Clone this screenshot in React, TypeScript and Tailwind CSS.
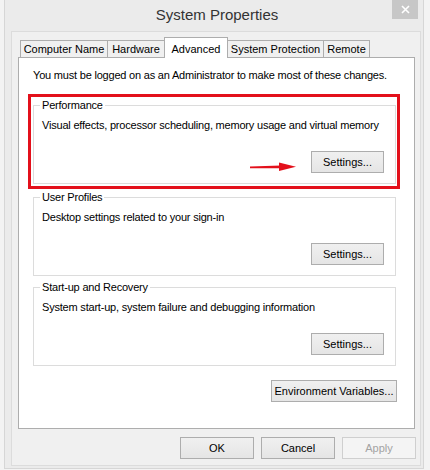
import React from "react";

const font = { fontFamily: '"Liberation Sans", Arial, sans-serif' };

const btnBase =
  "flex items-center justify-center h-[22px] border text-[11px] leading-none whitespace-nowrap";
const btn = `${btnBase} border-[#adadad] bg-linear-to-b from-[#f0f0f0] to-[#e5e5e5] text-black`;
const btnDisabled = `${btnBase} border-[#cfcfcf] bg-[#f4f4f4] text-[#a3a3a3]`;

const label = "text-[11px] leading-[15px] tracking-[-0.2px] text-black whitespace-nowrap";

const tabs = [
  { label: "Computer Name", w: "w-[88px]" },
  { label: "Hardware", w: "w-[58px]" },
  { label: "Advanced", w: "w-[64px]", active: true },
  { label: "System Protection", w: "w-[97px]" },
  { label: "Remote", w: "w-[47px]" },
];

type GroupProps = {
  title: string;
  text: string;
  className?: string;
  children?: React.ReactNode;
};

const Group = ({ title, text, className = "", children }: GroupProps) => (
  <fieldset
    className={`relative ml-[14px] mr-[18px] border border-[#dcdcdc] px-[8px] pb-[10px] ${className}`}
  >
    <legend className={`-ml-[2px] px-[2px] ${label}`}>{title}</legend>
    <p className={`mt-[5px] ${label}`}>{text}</p>
    <div className="mt-[18px] flex justify-end pr-[3px]">
      <button className={`${btn} w-[73px]`}>Settings...</button>
    </div>
    {children}
  </fieldset>
);

const App = () => {
  return (
    <div className="w-[430px] h-[470px] overflow-hidden bg-[#f3f3f3]" style={font}>
      <div className="ml-[4px] mr-[6px] h-[469px] flex flex-col border-x border-b border-[#d6d6d6] bg-[#ebebeb]">
        {/* title bar */}
        <div className="relative h-[31px] shrink-0 flex items-center justify-center pl-[6px]">
          <span className="text-[15px] text-[#333333]">System Properties</span>
          <button className="absolute top-0 right-[5px] w-[26px] h-[19px] flex items-center justify-center bg-[#c7c7c7]">
            <svg width="9" height="9" viewBox="0 0 9 9">
              <path d="M1 1 L8 8 M8 1 L1 8" stroke="#ffffff" strokeWidth="1.6" />
            </svg>
          </button>
        </div>

        {/* client area */}
        <div className="flex-1 ml-[6px] mr-[2px] mb-[2px] border border-[#dcdcdc] bg-[#f0f0f0] flex flex-col">
          <div className="flex items-end pl-[8px] pt-[5px] h-[25px]">
            {tabs.map((t, i) =>
              t.active ? (
                <div
                  key={t.label}
                  className={`${t.w} ${i ? "-ml-px" : ""} relative z-10 -mb-px h-[21px] border border-b-0 border-[#adadad] bg-white flex items-start justify-center pt-[3px] text-[11px] text-black whitespace-nowrap`}
                >
                  {t.label}
                </div>
              ) : (
                <div
                  key={t.label}
                  className={`${t.w} ${i ? "-ml-px" : ""} h-[17px] border border-b-0 border-[#adadad] bg-[#f0f0f0] flex items-center justify-center text-[11px] text-black whitespace-nowrap`}
                >
                  {t.label}
                </div>
              )
            )}
          </div>

          {/* tab page */}
          <div className="ml-[6px] mr-[5px] h-[372px] border border-[#adadad] bg-white flex flex-col pt-[10px]">
            <p className={`pl-[14px] ${label}`}>
              You must be logged on as an Administrator to make most of these changes.
            </p>

            <Group
              title="Performance"
              text="Visual effects, processor scheduling, memory usage and virtual memory"
              className="mt-[15px]"
            >
              {/* highlight frame + pointer */}
              <div className="absolute -left-[6px] -top-[19px] -right-[5px] -bottom-[6px] border-[3px] border-[#e3101b] pointer-events-none" />
              <svg
                className="absolute left-[216px] top-[49px]"
                width="46"
                height="10"
                viewBox="0 0 46 10"
              >
                <polygon points="0,4.6 31,3.6 31,6.2 0,6.2" fill="#e3101b" />
                <polygon points="29,0.6 46,4.8 29,9" fill="#e3101b" />
              </svg>
            </Group>

            <Group
              title="User Profiles"
              text="Desktop settings related to your sign-in"
              className="mt-[6px]"
            />

            <Group
              title="Start-up and Recovery"
              text="System start-up, system failure and debugging information"
              className="mt-[4px]"
            />

            <div className="mt-[14px] flex justify-end mr-[17px]">
              <button className={`${btn} w-[126px] h-[21px]`}>Environment Variables...</button>
            </div>
          </div>

          {/* dialog buttons */}
          <div className="mt-[8px] mr-[4px] flex justify-end gap-[7px]">
            <button className={`${btn} w-[74px]`}>OK</button>
            <button className={`${btn} w-[74px]`}>Cancel</button>
            <button className={`${btnDisabled} w-[74px]`} disabled>
              Apply
            </button>
          </div>
        </div>
      </div>
    </div>
  );
};

export default App;
